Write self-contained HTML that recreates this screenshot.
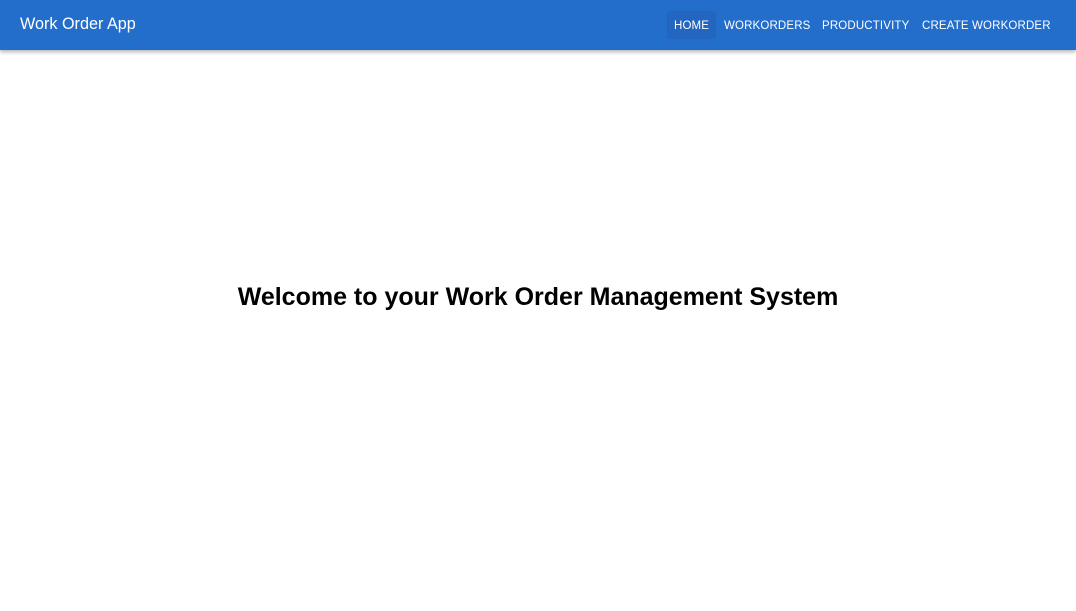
<!DOCTYPE html>
<html><head><style>
body{margin:0;width:1076px;height:611px;background:#fff;font-family:"Liberation Sans",sans-serif;overflow:hidden}
.bar{position:absolute;left:0;top:0;width:1076px;height:50px;background:#236dcb;box-shadow:0 2px 4px rgba(0,0,0,.3)}
.logo{position:absolute;left:20px;top:15px;color:#fff;font-size:16.2px}
.nav{position:absolute;top:11px;height:28px;line-height:30px;color:#fff;font-size:11.5px;letter-spacing:.15px}
.home{background:#2366bf;border-radius:3px;padding:0 7px}
h1{position:absolute;top:283px;left:0;width:1076px;text-align:center;margin:0;font-size:25px;font-weight:bold;color:#000}
</style></head><body>
<div class="bar">
<div class="logo">Work Order App</div>
<div class="nav home" style="left:667px">HOME</div>
<div class="nav" style="left:724px">WORKORDERS</div>
<div class="nav" style="left:822px">PRODUCTIVITY</div>
<div class="nav" style="left:922px">CREATE WORKORDER</div>
</div>
<h1>Welcome to your Work Order Management System</h1>
</body></html>
